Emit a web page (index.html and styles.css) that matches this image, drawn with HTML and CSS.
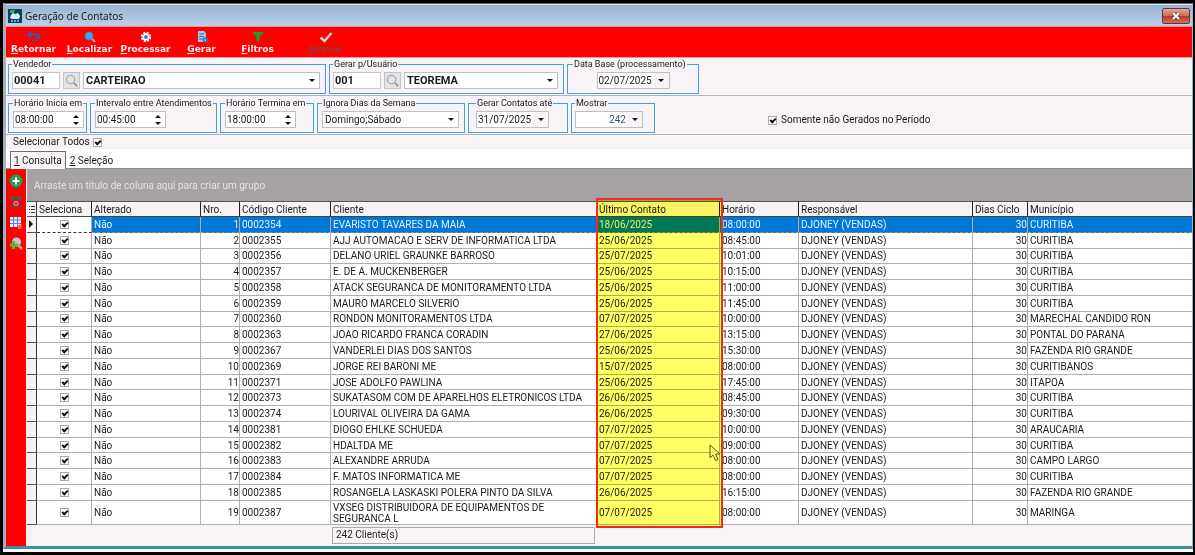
FILE: index.html
```html
<!DOCTYPE html>
<html lang="pt-BR">
<head>
    <meta charset="UTF-8">
    <meta name="viewport" content="width=device-width, initial-scale=1.0">
    <title>Geração de Contatos</title>
    <link rel="stylesheet" href="styles.css">
</head>
<body>
    <div class="window">
        <header class="title-bar">
            <svg class="app-icon" viewBox="0 0 14 14">
                <rect width="14" height="14" fill="#12405f"/>
                <path d="M2 1h5l-1 3H2z" fill="#3fae4a"/>
                <path d="M3 6l2-2 2 1 3-1 2 3-1 3H4L2 9z" fill="#dcecf5"/>
                <path d="M3 11h2v2H3zM6 11h2v2H6zM9 11h2v2H9z" fill="#5aa8d8"/>
            </svg>
            <h1>Geração de Contatos</h1>
            <button class="close-button" aria-label="Fechar">
                <svg viewBox="0 0 10 8"><path d="M2 1l6 6M8 1L2 7" stroke="#6b3a3a" stroke-width="3.6"/><path d="M2 1l6 6M8 1L2 7" stroke="#fff" stroke-width="2"/></svg>
            </button>
        </header>

        <nav class="toolbar">
            <button>
                <svg viewBox="0 0 14 12"><path d="M4 1L1 3.500l3 2.500M1.500 3.500H10q2 0 2 2t-2 2H8" fill="none" stroke="#1f5fc0" stroke-width="2"/><path d="M2 9.500h8" stroke="#7a3a8c" stroke-width="1.500" stroke-dasharray="2 1"/></svg>
                <span><u>R</u>etornar</span>
            </button>
            <button>
                <svg viewBox="0 0 14 12"><path d="M8.500 7.500l3.500 3.500" stroke="#b9a8a0" stroke-width="2"/><circle cx="6" cy="5" r="4" fill="#3fa4f0" stroke="#4b7fc4"/></svg>
                <span><u>L</u>ocalizar</span>
            </button>
            <button>
                <svg viewBox="0 0 14 12"><circle cx="7" cy="6" r="4" fill="none" stroke="#e4ecfa" stroke-width="2.500" stroke-dasharray="2 1.140"/><circle cx="7" cy="6" r="2.700" fill="#3d78c8" stroke="#fff" stroke-width="1.600"/></svg>
                <span><u>P</u>rocessar</span>
            </button>
            <button>
                <svg viewBox="0 0 14 12"><path d="M3 0h6l2 2v9H3z" fill="#9cc9f5"/><path d="M4 3h5M4 5.500h5M4 8h4" stroke="#2b74c8"/><circle cx="10.500" cy="9" r="2" fill="none" stroke="#3c6da8" stroke-width="1.600"/></svg>
                <span><u>G</u>erar</span>
            </button>
            <button>
                <svg viewBox="0 0 14 12"><path d="M1 1h12L8.500 6v5l-3-1V6z" fill="#1f9a2c"/></svg>
                <span><u>F</u>iltros</span>
            </button>
            <button class="wide" disabled>
                <svg viewBox="0 0 14 12"><path d="M1.500 6.500l4 3.500 7-8" fill="none" stroke="#d9cfcc" stroke-width="2.500"/></svg>
                <span><u>G</u>ravar</span>
            </button>
        </nav>

        <main>
            <div class="filters filters-top">
                <fieldset class="vendedor">
                    <legend>Vendedor</legend>
                    <input class="code" type="text" value="00041" aria-label="Código do vendedor">
                    <button class="search" aria-label="Buscar vendedor"><svg viewBox="0 0 14 14"><circle cx="6" cy="6" r="4.500" fill="#dfe6e6" stroke="#8f9797"/><path d="M9.500 9.500l3.500 3.500" stroke="#8f9797" stroke-width="2"/></svg></button>
                    <div class="combo bold"><select aria-label="Vendedor"><option>CARTEIRAO</option></select></div>
                </fieldset>
                <fieldset class="usuario">
                    <legend>Gerar p/Usuário</legend>
                    <input class="code" type="text" value="001" aria-label="Código do usuário">
                    <button class="search" aria-label="Buscar usuário"><svg viewBox="0 0 14 14"><circle cx="6" cy="6" r="4.500" fill="#dfe6e6" stroke="#8f9797"/><path d="M9.500 9.500l3.500 3.500" stroke="#8f9797" stroke-width="2"/></svg></button>
                    <div class="combo bold"><select aria-label="Usuário"><option>TEOREMA</option></select></div>
                </fieldset>
                <fieldset class="data-base">
                    <legend>Data Base (processamento)</legend>
                    <div class="date"><input type="text" value="02/07/2025" aria-label="Data base"><button aria-label="Abrir calendário"></button></div>
                </fieldset>
            </div>

            <div class="filters filters-bottom">
                <fieldset class="inicia">
                    <legend>Horário Inicia em</legend>
                    <div class="spin"><input type="text" value="08:00:00" aria-label="Horário inicia em"><button aria-label="Ajustar horário"></button></div>
                </fieldset>
                <fieldset class="intervalo">
                    <legend>Intervalo entre Atendimentos</legend>
                    <div class="spin"><input type="text" value="00:45:00" aria-label="Intervalo entre atendimentos"><button aria-label="Ajustar intervalo"></button></div>
                </fieldset>
                <fieldset class="termina">
                    <legend>Horário Termina em</legend>
                    <div class="spin"><input type="text" value="18:00:00" aria-label="Horário termina em"><button aria-label="Ajustar horário"></button></div>
                </fieldset>
                <fieldset class="ignora">
                    <legend>Ignora Dias da Semana</legend>
                    <div class="combo"><select aria-label="Ignora dias da semana"><option>Domingo;Sábado</option></select></div>
                </fieldset>
                <fieldset class="ate">
                    <legend>Gerar Contatos até</legend>
                    <div class="date"><input type="text" value="31/07/2025" aria-label="Gerar contatos até"><button aria-label="Abrir calendário"></button></div>
                </fieldset>
                <fieldset class="mostrar">
                    <legend>Mostrar</legend>
                    <div class="date"><input type="text" value="242" aria-label="Mostrar"><button aria-label="Abrir calculadora"></button></div>
                </fieldset>
                <label class="somente"><input type="checkbox" checked> Somente não Gerados no Período</label>
            </div>

            <div class="select-all"><label>Selecionar Todos <input type="checkbox" checked></label></div>

            <div class="tabs" role="tablist">
                <button class="tab active" role="tab"><u>1</u> Consulta</button>
                <button class="tab" role="tab"><u>2</u> Seleção</button>
            </div>

            <div class="content">
                <aside class="side-bar">
                    <button aria-label="Adicionar"><svg viewBox="0 0 14 14"><circle cx="7" cy="7" r="6.500" fill="#23a04a"/><path d="M7 3.500v7M3.500 7h7" stroke="#fff" stroke-width="2"/></svg></button>
                    <button aria-label="Telefone"><svg viewBox="0 0 14 14"><path d="M1 1h12v4h-3V4H4v1H1z" fill="#6e4a46"/><path d="M5 5h4l3.500 7h-11z" fill="#7d4440"/><circle cx="7" cy="8.500" r="2" fill="#a33a34" stroke="#e0a8a2"/></svg></button>
                    <button aria-label="Grade"><svg viewBox="0 0 14 14"><rect x="1" y="1" width="11" height="10" fill="#e6f0ff"/><path d="M1 4h11M1 7.500h11M4.500 1v10M8.500 1v10" stroke="#4f86dd"/><path d="M8 9h5l-1 4H9z" fill="#f0714a"/></svg></button>
                    <button aria-label="Localizar cliente"><svg viewBox="0 0 14 14"><circle cx="7.500" cy="5" r="4.500" fill="#b9cbd2"/><path d="M9 8l4 4" stroke="#d9a05a" stroke-width="2.500"/><path d="M4.500 4v8M1 8h8" stroke="#5cb531" stroke-width="3"/></svg></button>
                </aside>

                <section class="grid">
                    <div class="group-panel">Arraste um título de coluna aqui para criar um grupo</div>
                    <div class="table-area">
                        <table>
                            <colgroup>
                                <col class="c-mark"><col class="c-sel"><col class="c-alt"><col class="c-nro"><col class="c-cod"><col class="c-cli">
                                <col class="c-ult"><col class="c-hor"><col class="c-resp"><col class="c-dias"><col>
                            </colgroup>
                            <thead>
                                <tr>
                                    <th class="mark"><svg viewBox="0 0 6 9"><path d="M0 1.500h1M2 1.500h4M0 4.500h1M2 4.500h4M0 7.500h1M2 7.500h4" stroke="#333"/></svg></th>
                                    <th>Seleciona</th>
                                    <th>Alterado</th>
                                    <th>Nro.</th>
                                    <th>Código Cliente</th>
                                    <th>Cliente</th>
                                    <th>Último Contato</th>
                                    <th>Horário</th>
                                    <th>Responsável</th>
                                    <th>Dias Ciclo</th>
                                    <th>Município</th>
                                </tr>
                            </thead>
                            <tbody id="rows"></tbody>
                        </table>
                        <div class="highlight">
                            <svg class="pointer" viewBox="0 0 12 18"><path d="M1 1v13l3-3 2.500 5.500 2.500-1L6.500 10H11z" fill="#ffff66" stroke="#55551f" stroke-width="1"/></svg>
                        </div>
                    </div>
                    <div class="grid-footer"><span>242 Cliente(s)</span></div>
                </section>
            </div>
        </main>
    </div>
    <div class="bottom-strip"></div>

    <script src="script.js"></script>
</body>
</html>
```
FILE: styles.css
```css
*, *::before, *::after {
    box-sizing: border-box;
}

body {
    margin: 0;
    height: 100vh;
    display: flex;
    flex-direction: column;
    border: 3px solid #000;
    border-right-width: 2px;
    background-color: #fff;
    font-family: Roboto, "Liberation Sans", sans-serif;
    font-size: 10px;
    line-height: 12px;
    color: #1c1a1c;
}

button, input, select {
    font: inherit;
    color: inherit;
    margin: 0;
    padding: 0;
    border: none;
    background: none;
}

svg {
    display: block;
    flex-shrink: 0;
}

.window {
    flex: 1;
    display: flex;
    flex-direction: column;
    border: 1px solid #555;
    border-width: 1px 1px 3px 3px;
    border-color: #666 #7cc4e8 #3c8fa8 #a9b0b8;
    background-color: #f7f3f7;
}

.bottom-strip {
    height: 3px;
}

.title-bar {
    display: flex;
    align-items: center;
    height: 22px;
    padding: 0 2px;
    background: linear-gradient(#98b4d2, #b9d0ea);
    border-top: 1px solid #dbe6f2;
}

.app-icon {
    width: 14px;
    height: 14px;
    margin-right: 3px;
}

h1 {
    flex: 1;
    margin: 0;
    font-family: "Noto Sans", "Open Sans", sans-serif;
    font-size: 10px;
    font-weight: normal;
}

.close-button {
    display: flex;
    align-items: center;
    justify-content: center;
    width: 28px;
    height: 16px;
    border: 1px solid #6b3434;
    border-radius: 2px;
    background: linear-gradient(#e2a79c, #cf6a58 48%, #b93a24 52%, #d0705c);
}

.close-button svg {
    width: 10px;
    height: 8px;
}

.toolbar {
    display: flex;
    gap: 1px;
    height: 32px;
    background-color: #ff0000;
    border-top: 1px solid #f88;
    border-bottom: 1px solid #f99;
}

.toolbar button {
    display: flex;
    flex-direction: column;
    align-items: center;
    width: 55px;
    padding-top: 4px;
    color: #ffecec;
    font-family: "DejaVu Sans", sans-serif;
    font-size: 9px;
    font-weight: bold;
}

.toolbar .wide {
    width: 80px;
}

.toolbar button:disabled {
    color: #84403c;
}

.toolbar svg {
    width: 14px;
    height: 12px;
}

main {
    flex: 1;
    display: flex;
    flex-direction: column;
    min-height: 0;
}

.filters {
    display: flex;
    gap: 3px;
    height: 38px;
    padding: 0 2px;
    border-bottom: 1px solid #b5b5b8;
}

.filters-bottom {
    height: 39px;
    padding-top: 1px;
}

fieldset {
    display: flex;
    min-width: 0;
    height: 36px;
    margin: 0;
    padding: 2px 5px 0;
    border: 1px solid #4a9ee0;
    white-space: nowrap;
}

legend {
    height: 12px;
    padding: 0 1px;
    font-size: 9px;
}

.vendedor {
    width: 318px;
}

.usuario {
    width: 235px;
}

.vendedor, .usuario {
    padding-left: 3px;
}

.data-base {
    width: 132px;
    justify-content: center;
}

.inicia {
    width: 79px;
}

.intervalo {
    width: 127px;
}

.termina {
    width: 94px;
}

.ignora {
    width: 148px;
    padding-left: 4px;
}

.ate {
    width: 100px;
    padding-left: 7px;
}

.mostrar {
    width: 84px;
    padding-left: 3px;
}

.inicia, .intervalo, .termina {
    padding-left: 4px;
    padding-right: 2px;
}

.code {
    width: 48px;
    height: 17px;
    margin-right: 3px;
    padding: 0 1px;
    border: 1px solid #c9c9cc;
    background-color: #fff;
    font-size: 11px;
    font-weight: bold;
}

.search {
    display: flex;
    align-items: center;
    justify-content: center;
    width: 17px;
    height: 17px;
    margin-right: 3px;
    border: 1px solid #c4c4c6;
    background-color: #e4e2e4;
}

.search svg {
    width: 13px;
    height: 13px;
}

.combo {
    position: relative;
    flex: 1;
    height: 17px;
    border: 1px solid #c0c0c3;
    background-color: #fff;
}

.combo select {
    appearance: none;
    width: 100%;
    height: 15px;
    padding: 0 2px;
}

.combo.bold {
    font-size: 11px;
    font-weight: bold;
}

.combo::after {
    content: "";
    position: absolute;
    right: 4px;
    top: 6px;
    border: 3px solid transparent;
    border-top-color: #111;
    border-bottom: none;
    pointer-events: none;
}

.date, .spin {
    display: flex;
    height: 17px;
    border: 1px solid #c0c0c3;
    background-color: #fff;
}

.date input {
    width: 56px;
    padding: 0 1px;
}

.spin input {
    width: 54px;
    padding: 0 1px;
}

.date button {
    width: 15px;
    background-color: #f7f3f7;
}

.date button::after {
    content: "";
    display: block;
    width: 6px;
    margin: 0 auto;
    border: 3px solid transparent;
    border-top-color: #111;
    border-bottom: none;
}

.spin button {
    width: 15px;
}

.spin button::before, .spin button::after {
    content: "";
    display: block;
    width: 6px;
    margin: 0 auto;
    border: 3px solid transparent;
}

.spin button::before {
    border-bottom-color: #111;
    border-top: none;
    margin-bottom: 4px;
}

.spin button::after {
    border-top-color: #111;
    border-bottom: none;
}

.mostrar .date input {
    width: 51px;
    text-align: right;
    color: #35507c;
}

input[type="checkbox"] {
    appearance: none;
    position: relative;
    width: 9px;
    height: 9px;
    border: 1px solid #a9a9ac;
    background-color: #fff;
    vertical-align: middle;
}

input[type="checkbox"]:checked::after {
    content: "";
    position: absolute;
    left: 2px;
    top: 0;
    width: 4px;
    height: 6px;
    border: solid #111;
    border-width: 0 2px 2px 0;
    transform: rotate(45deg);
}

.somente {
    display: flex;
    align-items: center;
    gap: 4px;
    margin: 9px 0 0 110px;
}

.select-all {
    height: 14px;
    padding: 1px 0 0 7px;
}

.select-all label {
    display: flex;
    align-items: center;
    gap: 3px;
}

.tabs {
    display: flex;
    height: 20px;
    padding: 2px 4px 0;
    background-color: #fff;
    border-bottom: 1px solid #8f8f92;
}

.tab {
    height: 18px;
    padding: 1px 4px 0;
}

.tab.active {
    padding: 0 3px;
    border: 1px solid #6f6f72;
    border-bottom: none;
    background-color: #f7f3f7;
}

.content {
    flex: 1;
    display: flex;
    min-height: 0;
}

.side-bar {
    display: flex;
    flex-direction: column;
    gap: 7px;
    width: 20px;
    padding: 5px 3px;
    background-color: #ff0000;
}

.side-bar svg {
    width: 14px;
    height: 14px;
}

.grid {
    flex: 1;
    display: flex;
    flex-direction: column;
    min-width: 0;
    margin-left: 1px;
}

.group-panel {
    height: 32px;
    padding: 11px 7px 0;
    background-color: #a5a1a5;
    color: #e4e2e4;
}

.table-area {
    position: relative;
    flex: 1;
}

table {
    width: 100%;
    height: 100%;
    table-layout: fixed;
    border-collapse: separate;
    border-spacing: 0;
    background-color: #fff;
}

.c-mark {
    width: 10px;
}

.c-sel {
    width: 55px;
}

.c-alt {
    width: 109px;
}

.c-nro {
    width: 39px;
}

.c-cod {
    width: 91px;
}

.c-cli {
    width: 266px;
}

.c-ult {
    width: 123px;
}

.c-hor {
    width: 79px;
}

.c-resp {
    width: 174px;
}

.c-dias {
    width: 55px;
}

th, td {
    padding: 0 1px 0 2px;
    text-align: left;
    line-height: 11px;
    vertical-align: middle;
    overflow: hidden;
    border-right: 1px solid #b0aeb0;
    border-bottom: 1px solid #b0aeb0;
}

th {
    height: 16px;
    font-weight: normal;
    background-color: #f7f3f7;
    border-top: 1px solid #555;
    border-right-color: #222;
    border-bottom-color: #444;
    white-space: nowrap;
}

th:last-child, td:last-child {
    border-right: none;
}

.mark {
    padding: 0 2px;
    background-color: #f7f3f7;
    border-right-color: #333;
    border-bottom-color: #555;
}

.mark svg {
    width: 6px;
    height: 9px;
}

.marker {
    display: block;
    width: 4px;
    border: 4px solid transparent;
    border-left-color: #111;
    border-right: none;
}

.center {
    text-align: center;
    line-height: 0;
}

.right {
    text-align: right;
    padding-right: 0;
}

.selected td:nth-child(n+3) {
    background-color: #0078d7;
    color: #e4f1ff;
    border-bottom: 1px dashed #b8855c;
}

.selected .center {
    border-bottom: 1px dashed #333;
}

.tall td {
    height: 24px;
}

/* marks the "Último Contato" column */
.highlight {
    position: absolute;
    left: 569px;
    top: -3px;
    bottom: -3px;
    width: 127px;
    border: 2px solid #f62a1c;
}

.highlight::before {
    content: "";
    position: absolute;
    inset: 0;
    background-color: #ffff66;
    mix-blend-mode: multiply;
}

.pointer {
    position: absolute;
    right: 0;
    bottom: 64px;
    width: 12px;
    height: 18px;
}

.grid-footer {
    height: 21px;
    padding: 2px 0 0 305px;
}

.grid-footer span {
    display: block;
    width: 263px;
    height: 17px;
    padding: 1px 3px;
    border: 1px solid #aaa8aa;
}
```
FILE: script.js
```javascript
const contatos = [
    ['0002354', 'EVARISTO TAVARES DA MAIA', '18/06/2025', '08:00:00', 'CURITIBA'],
    ['0002355', 'AJJ AUTOMACAO E SERV DE INFORMATICA LTDA', '25/06/2025', '08:45:00', 'CURITIBA'],
    ['0002356', 'DELANO URIEL GRAUNKE BARROSO', '25/07/2025', '10:01:00', 'CURITIBA'],
    ['0002357', 'E. DE A. MUCKENBERGER', '25/06/2025', '10:15:00', 'CURITIBA'],
    ['0002358', 'ATACK SEGURANCA DE MONITORAMENTO LTDA', '25/06/2025', '11:00:00', 'CURITIBA'],
    ['0002359', 'MAURO MARCELO SILVERIO', '25/06/2025', '11:45:00', 'CURITIBA'],
    ['0002360', 'RONDON MONITORAMENTOS LTDA', '07/07/2025', '10:00:00', 'MARECHAL CANDIDO RON'],
    ['0002363', 'JOAO RICARDO FRANCA CORADIN', '27/06/2025', '13:15:00', 'PONTAL DO PARANA'],
    ['0002367', 'VANDERLEI DIAS DOS SANTOS', '25/06/2025', '15:30:00', 'FAZENDA RIO GRANDE'],
    ['0002369', 'JORGE REI BARONI ME', '15/07/2025', '08:00:00', 'CURITIBANOS'],
    ['0002371', 'JOSE ADOLFO PAWLINA', '25/06/2025', '17:45:00', 'ITAPOA'],
    ['0002373', 'SUKATASOM COM DE APARELHOS ELETRONICOS LTDA', '26/06/2025', '08:45:00', 'CURITIBA'],
    ['0002374', 'LOURIVAL OLIVEIRA DA GAMA', '26/06/2025', '09:30:00', 'CURITIBA'],
    ['0002381', 'DIOGO EHLKE SCHUEDA', '07/07/2025', '10:00:00', 'ARAUCARIA'],
    ['0002382', 'HDALTDA ME', '07/07/2025', '09:00:00', 'CURITIBA'],
    ['0002383', 'ALEXANDRE ARRUDA', '07/07/2025', '08:00:00', 'CAMPO LARGO'],
    ['0002384', 'F. MATOS INFORMATICA ME', '07/07/2025', '08:00:00', 'CURITIBA'],
    ['0002385', 'ROSANGELA LASKASKI POLERA PINTO DA SILVA', '26/06/2025', '16:15:00', 'FAZENDA RIO GRANDE'],
    ['0002387', 'VXSEG DISTRIBUIDORA DE EQUIPAMENTOS DE SEGURANCA L', '07/07/2025', '08:00:00', 'MARINGA']
];

document.getElementById('rows').innerHTML = contatos.map((c, i) => {
    const rowClass = i === 0 ? 'selected' : i === contatos.length - 1 ? 'tall' : '';
    return `
        <tr class="${rowClass}">
            <td class="mark">${i === 0 ? '<span class="marker"></span>' : ''}</td>
            <td class="center"><input type="checkbox" aria-label="Selecionar ${c[0]}" checked></td>
            <td>Não</td>
            <td class="right">${i + 1}</td>
            <td>${c[0]}</td>
            <td>${c[1]}</td>
            <td>${c[2]}</td>
            <td>${c[3]}</td>
            <td>DJONEY (VENDAS)</td>
            <td class="right">30</td>
            <td>${c[4]}</td>
        </tr>`;
}).join('');
```
